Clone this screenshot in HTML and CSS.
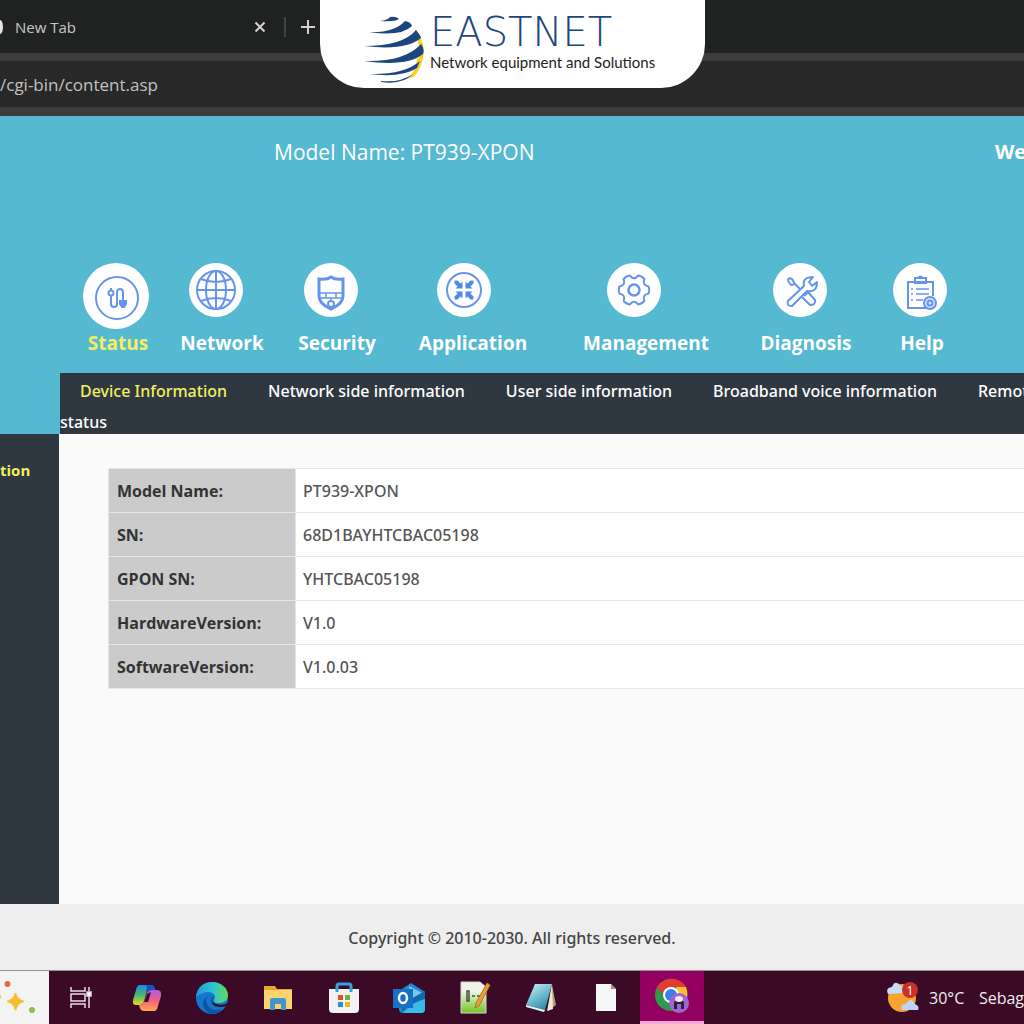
FILE: index.html
```html
<!DOCTYPE html>
<html lang="en">
<head>
<meta charset="utf-8">
<title>PT939-XPON</title>
<link rel="stylesheet" href="styles.css">
</head>
<body>
<div class="browser">
  <div class="tabs">
    <span class="favicon"></span>
    <span class="tab-title">New Tab</span>
    <button class="tab-button" aria-label="Close tab"><svg width="12" height="12" viewBox="0 0 12 12"><path d="M1.500 1.500l9 9M10.500 1.500l-9 9" stroke="#d2d2d2" stroke-width="2"/></svg></button>
    <span class="tab-divider"></span>
    <button class="tab-button" aria-label="Open tab"><svg width="14" height="14" viewBox="0 0 14 14"><path d="M7 0v14M0 7h14" stroke="#d2d2d2" stroke-width="2"/></svg></button>
  </div>
  <div class="address-bar"><input class="address" type="text" aria-label="Address" value="/cgi-bin/content.asp"></div>
</div>

<div class="brand">
  <svg class="brand-globe" width="62" height="68" viewBox="0 0 62 68">
    <g fill="#f5d327"><path d="M51 12Q60 23 61 34L55 28Q55 20 51 12ZM61 36Q60 50 51 61L46 62Q53 53 54 43Z"/></g>
    <g fill="#1d4580">
      <path d="M17 5Q25 4 27 1Q33 0 36 3Q32 6 17 5Z"/>
      <path d="M6 16Q31 17 42 5Q48 6 49 10Q38 21 6 16Z"/>
      <path d="M1 30Q40 30 53 14Q58 20 58 22Q43 35 1 30Z"/>
      <path d="M1 45Q42 46 58 28Q62 34 60 38Q44 51 1 45Z"/>
      <path d="M6 58Q41 59 57 45L54 52Q39 62 6 58Z"/>
      <path d="M18 65Q37 67 50 58Q40 69 18 66Z"/>
    </g>
  </svg>
  <div class="brand-text">
    <div class="brand-name">EASTNET</div>
    <div class="brand-tagline">Network equipment and Solutions</div>
  </div>
</div>

<header class="header">
  <div class="header-top">
    <span class="model">Model Name: PT939-XPON</span>
    <span class="welcome">We</span>
  </div>
  <nav class="menu" aria-label="Main">
    <a class="menu-item active" href="#status"><span class="menu-icon">
      <svg width="66" height="66" viewBox="0 0 66 66" fill="none" stroke="#6593ee" stroke-width="2"><circle cx="34" cy="35" r="21"/><path d="M28 32v9q0 3 3 3t3-3V30q0-4 3-4t3 4v7M28 27v-2"/><circle cx="28" cy="30" r="2.500"/><path d="M37 38h6v3l-2 3h-2l-2-3z" fill="#6593ee"/></svg></span>Status</a>
    <a class="menu-item" href="#network"><span class="menu-icon">
      <svg width="54" height="54" viewBox="0 0 54 54" fill="none" stroke="#6593ee" stroke-width="2"><circle cx="27" cy="27" r="19"/><ellipse cx="27" cy="27" rx="10" ry="19"/><path d="M27 8v38M8 27h38M12 16q15 6 30 0M12 38q15-6 30 0"/></svg></span>Network</a>
    <a class="menu-item" href="#security"><span class="menu-icon">
      <svg width="54" height="54" viewBox="0 0 54 54" fill="none" stroke="#6593ee" stroke-width="2"><path d="M15 16q8 1 12-2 4 3 12 2v17q0 8-12 13-12-5-12-13z" stroke-width="3"/><path d="M15 30h24M16 35h22M22 30v5M32 30v5M27 35v4" stroke-width="1.500"/><circle cx="27" cy="41" r="3"/></svg></span>Security</a>
    <a class="menu-item icon-left" href="#application"><span class="menu-icon">
      <svg width="54" height="54" viewBox="0 0 54 54" fill="none" stroke="#6593ee" stroke-width="2"><circle cx="27" cy="27" r="17"/><g fill="#5288ed" stroke="none"><path id="arrow" d="M25.500 25.500h-7l2-2-3-3V17.500h3l3 3 2-2z"/><use href="#arrow" transform="rotate(90 27 27)"/><use href="#arrow" transform="rotate(180 27 27)"/><use href="#arrow" transform="rotate(270 27 27)"/></g></svg></span>Application</a>
    <a class="menu-item icon-far-left" href="#management"><span class="menu-icon">
      <svg width="54" height="54" viewBox="0 0 54 54" fill="none" stroke="#6593ee" stroke-width="2"><circle cx="27" cy="27" r="5.500" stroke-width="2.500"/><path stroke-linejoin="round" d="M41.600 23.400Q43 27 41.600 30.600Q35 32 37.400 37.800Q35 41 31.100 41.400Q27 36 22.900 41.400Q19 41 16.600 37.800Q19 32 12.400 30.600Q11 27 12.400 23.400Q19 22 16.600 16.200Q19 13 22.900 12.600Q27 18 31.100 12.600Q35 13 37.400 16.200Q35 22 41.600 23.400Z"/></svg></span>Management</a>
    <a class="menu-item" href="#diagnosis"><span class="menu-icon">
      <svg width="54" height="54" viewBox="0 0 54 54" fill="none" stroke="#6593ee" stroke-width="2" stroke-linejoin="round"><path d="M15 38l16-15q-2-9 9-9l-4 5 3 4 5-4q0 11-10 9L19 43q-6 0-4-5z"/><path d="M15 18q0-4 4-2l3 5 5 5M22 21l-4 1-3-4M31 33l4-4 7 8q1 5-5 5l-8-8"/></svg></span>Diagnosis</a>
    <a class="menu-item icon-near" href="#help"><span class="menu-icon">
      <svg width="54" height="54" viewBox="0 0 54 54" fill="none" stroke="#6593ee" stroke-width="2"><path d="M33 45H15V19h25v14"/><path d="M22 15h11v5H22zM25 15q2-3 5 0"/><path d="M23 26h13M23 31h13M23 37h7M18 26h2M18 31h2M18 37h2" stroke-width="1.500"/><circle cx="37" cy="40" r="6" fill="#d9e6ff"/><circle cx="37" cy="40" r="2.500"/></svg></span>Help</a>
  </nav>
</header>

<nav class="submenu" aria-label="Status pages"><a class="active" href="#device">Device Information</a><a href="#net">Network side information</a><a href="#user">User side information</a><a href="#voice">Broadband voice information</a><a href="#remote">Remot<br>status</a></nav>

<div class="body">
  <aside class="sidebar"><a href="#information">tion</a></aside>
  <main class="content">
    <table class="info">
      <tr><th scope="row">Model Name:</th><td>PT939-XPON</td></tr>
      <tr><th scope="row">SN:</th><td>68D1BAYHTCBAC05198</td></tr>
      <tr><th scope="row">GPON SN:</th><td>YHTCBAC05198</td></tr>
      <tr><th scope="row">HardwareVersion:</th><td>V1.0</td></tr>
      <tr><th scope="row">SoftwareVersion:</th><td>V1.0.03</td></tr>
    </table>
  </main>
</div>

<footer class="footer">Copyright © 2010-2030. All rights reserved.</footer>

<div class="taskbar">
  <div class="search-art"><svg width="49" height="52" viewBox="0 0 49 52"><path d="M15.500 23q1.500 6 7.500 7.500-6 1-7.500 8-1.500-7-7.500-8 6-1.500 7.500-7.500z" fill="#f8bd35" stroke="#f8bd35" stroke-width="2" stroke-linejoin="round"/><path d="M-3 21q4 2 4 4.500T-3 30z" fill="#f8bd35"/><circle cx="7.500" cy="13" r="3" fill="#df6d3c"/><circle cx="32" cy="39" r="3" fill="#8cbf4c"/></svg></div>
  <div class="apps">
    <button aria-label="Task view"><svg width="32" height="32" viewBox="0 0 32 32" fill="none" stroke="#e9dce5" stroke-width="1.500"><path d="M6 5v4h14V5M6 26v-4h14v4M6 12h14v7H6zM24 5v4M24 14v12"/><path d="M22 10h4v4h-4z" fill="#fff"/></svg></button>
    <button aria-label="Copilot"><svg width="32" height="32" viewBox="0 0 32 32"><defs><linearGradient id="c1" x2="0" y2="1"><stop stop-color="#2385e8"/><stop offset=".5" stop-color="#43b96f"/><stop offset="1" stop-color="#f3d321"/></linearGradient><linearGradient id="c2" x2="0" y2="1"><stop stop-color="#b05be8"/><stop offset=".5" stop-color="#f0607f"/><stop offset="1" stop-color="#ffa950"/></linearGradient></defs><path d="M9 3h11q3 0 4 5h-5q-3 0-4 4l-2 7q-1 4-5 4H5q-4 0-3-5L5 8q1-5 4-5z" fill="url(#c1)"/><path d="M16 3h4q3 0 4 5h-5q-3 0-4 4z" fill="#1651c6"/><path d="M23 29H13q-4 0-5-6 4 0 5-4l3-8q1-3 5-3h5q5 0 4 6l-3 10q-1 5-4 5z" fill="url(#c2)"/><path d="M16 12l4-2-3 10h-4z" fill="#3a0a27"/></svg></button>
    <button aria-label="Edge"><svg width="34" height="34" viewBox="0 0 34 34"><defs><linearGradient id="e1"><stop stop-color="#1a9be0"/><stop offset=".55" stop-color="#32c5cd"/><stop offset="1" stop-color="#62da55"/></linearGradient></defs><circle cx="17" cy="17" r="16" fill="#1276c9"/><path d="M1 16C2 6 9 1 17 1c9 0 16 6 16 13 0 5-4 8-9 8-4 0-6-2-4-5 1-5-8-10-19-1z" fill="url(#e1)"/><path d="M14 14q-6 6 0 12 5 5 13 2-5 6-13 4Q2 23 14 14z" fill="#0d53a3"/><path d="M19 14q-5 7 2 9 6 2 12-1l-1 3q-7 2-12 0-7-4-1-11z" fill="#3a0a27"/></svg></button>
    <button aria-label="File Explorer"><svg width="32" height="32" viewBox="0 0 32 32"><path d="M2 4h11l2 3h15v20H2z" fill="#e7a72d"/><path d="M2 8h28v19H2z" fill="#f9d36f"/><path d="M8 28V18q0-2 2-2h12q2 0 2 2v10h-5v-6h-6v6z" fill="#4295cf"/></svg></button>
    <button aria-label="Store"><svg width="34" height="34" viewBox="0 0 34 34"><path d="M10 11V5q0-2 2-2h10q2 0 2 2v6" fill="none" stroke="#3aa0dd" stroke-width="3"/><path d="M2 8h30v20q0 4-4 4H6q-4 0-4-4z" fill="#f2f2f3"/><path d="M10 11V8M24 11V8" stroke="#3aa0dd" stroke-width="3"/><path d="M11 14h5v5h-5z" fill="#df4b2c"/><path d="M18 14h5v5h-5z" fill="#7cae32"/><path d="M11 21h5v5h-5z" fill="#2893d1"/><path d="M18 21h5v5h-5z" fill="#edb529"/></svg></button>
    <button aria-label="Outlook"><svg width="34" height="34" viewBox="0 0 34 34"><path d="M7 10L19 2l14 9v17q0 4-4 4H11q-3 0-4-3z" fill="#2189d3"/><path d="M17 5l13 7-13 8z" fill="#75c9ee"/><path d="M33 11v17q0 4-4 4H11z" fill="#39bae9"/><path d="M33 10L10 23v8q8-9 23-13z" fill="#1565af"/><path d="M1 8h20v19H1z" fill="#176fc6"/><ellipse cx="11" cy="17" rx="4" ry="5" fill="none" stroke="#fff" stroke-width="2.500"/></svg></button>
    <button aria-label="Notepad++"><svg width="34" height="34" viewBox="0 0 34 34"><defs><linearGradient id="n1" x2="0" y2="1"><stop offset=".3" stop-color="#eef4e8"/><stop offset="1" stop-color="#6fc61d"/></linearGradient></defs><path d="M3 1h19l6 5v26H3z" fill="url(#n1)" stroke="#d7d7d7"/><path d="M9 10v10h2V10zM14 15h3M19 15h3" stroke="#46513f" stroke-width="1.500" fill="none"/><path d="M29 2l3 2-11 21-4 2 1-5z" fill="#e7a034" stroke="#b17426"/></svg></button>
    <button aria-label="Notepad"><svg width="34" height="34" viewBox="0 0 34 34"><defs><linearGradient id="p1" x2=".6" y2="1"><stop stop-color="#d8f2f6"/><stop offset=".6" stop-color="#68b9cd"/><stop offset="1" stop-color="#328ba5"/></linearGradient></defs><path d="M28 4l4 20-8 6z" fill="#b69b77"/><path d="M28 3l1 25-6 2z" fill="#efe8d6"/><path d="M11 3h17l-7 26L2 24z" fill="url(#p1)"/><path d="M2 24l19 5-1 2-18-5z" fill="#e5f3f6"/></svg></button>
    <button aria-label="Document"><svg width="32" height="32" viewBox="0 0 32 32"><path d="M6 2h15l5 5v22H6z" fill="#f5f6f6"/><path d="M21 2v5h5z" fill="#969096"/></svg></button>
    <button class="running" aria-label="Chrome"><svg width="36" height="36" viewBox="0 0 36 36"><circle cx="17" cy="17" r="16" fill="#2b9b48"/><path d="M3 9C10-3 27-1 32 9H17q-7 0-8 8z" fill="#df3d31"/><path d="M32 9q5 13-7 22l-8-5 7-9-2-8z" fill="#f6c52d"/><circle cx="17" cy="17" r="8" fill="#fff"/><circle cx="17" cy="17" r="6" fill="#397fe6"/><circle cx="25" cy="25" r="10" fill="#a064d5"/><path d="M20 31v-6q0-3 5-3t5 3v6h-3v-5h-4v5z" fill="#292333"/><ellipse cx="25" cy="21" rx="4" ry="3" fill="#f0eafa"/></svg></button>
  </div>
  <div class="weather">
    <svg width="34" height="34" viewBox="0 0 34 34"><circle cx="16" cy="17" r="14" fill="#f7a32d"/><path d="M2 13q-3-6 4-7 3-8 9-1 6 0 4 7z" fill="#c9dcf7"/><path d="M16 29q-3-6 4-6 5-8 9 0 5 2 3 6z" fill="#bcd5f7"/><circle cx="24" cy="9" r="8" fill="#c9302a"/><text class="badge-count" x="24" y="14" text-anchor="middle">1</text></svg>
    <span class="temperature">30°C</span><span>Sebag</span>
  </div>
</div>
</body>
</html>
```
FILE: styles.css
```css
* { box-sizing: border-box; }
body {
  margin: 0;
  min-height: 100vh;
  display: flex;
  flex-direction: column;
  overflow-x: hidden;
  background: #fafafa;
  color: #444;
  font-family: "Noto Sans", "Open Sans", sans-serif;
  font-size: 16px;
}
a { color: inherit; text-decoration: none; }
button { border: 0; padding: 0; background: none; display: flex; align-items: center; justify-content: center; }

.browser { background: #3c3c3b; padding-bottom: 9px; font-family: "Open Sans", sans-serif; }
.tabs { height: 53px; display: flex; align-items: center; background: #202221; color: #c8c8c8; font-size: 15px; }
.favicon { width: 3px; height: 14px; border-radius: 0 100% 100% 0 / 0 50% 50% 0; background: #e4e4e4; }
.tab-title { width: 238px; padding-left: 12px; }
.tab-button { width: 38px; height: 32px; }
.tab-divider { width: 2px; height: 20px; margin: 0 3px 0 5px; background: #414342; }
.address-bar { margin-top: 8px; height: 46px; background: #282828; }
.address { width: 100%; height: 46px; border: 0; padding: 0; background: none; color: #c2c2c2; font: inherit; font-size: 17px; }

.brand {
  position: absolute;
  top: 0;
  left: 50%;
  width: 385px;
  height: 88px;
  margin-left: -192px;
  padding: 16px 0 0 43px;
  display: flex;
  gap: 5px;
  border-radius: 0 0 44px 44px;
  background: #fff;
}
.brand-globe { flex: none; }
.brand-text { white-space: nowrap; }
.brand-name { color: #1d4580; font-family: "DejaVu Sans", sans-serif; font-weight: 200; font-size: 40px; line-height: 32px; }
.brand-tagline { color: #222; font-family: Lato, sans-serif; font-size: 15px; line-height: 28px; }

.header { background: #55b9d2; color: #fff; padding-top: 20px; height: 257px; font-family: "Open Sans", sans-serif; }
.header-top { display: flex; justify-content: space-between; font-size: 21px; line-height: 32px; padding-left: 274px; }
.welcome { width: 29px; font-size: 20px; font-weight: 700; overflow: hidden; }
.menu { display: grid; grid-template-columns: 104px 104px 126px 146px 200px 120px 112px; padding: 95px 0 0 66px; font-size: 19px; font-weight: 700; line-height: 28px; }
.menu-item { display: flex; flex-direction: column; align-items: center; }
.menu-icon { height: 66px; margin-right: 12px; }
.menu-icon svg { display: block; border-radius: 50%; background: #fff; }
.active { color: #f2ef62; }
.menu-item.active .menu-icon, .icon-near .menu-icon { margin-right: 4px; }
.icon-left .menu-icon { margin-right: 18px; }
.icon-far-left .menu-icon { margin-right: 24px; }

.submenu { margin-left: 60px; background: #2f3741; box-shadow: -60px 0 #55b9d2; color: #fff; font-weight: 500; line-height: 31px; height: 61px; padding-top: 3px; white-space: nowrap; overflow: hidden; }
.submenu a { padding: 0 21px 0 20px; }
.body { flex: 1; display: flex; }
.sidebar { width: 59px; background: #2f3741; color: #f2ef62; font-family: "Open Sans", sans-serif; font-size: 15px; font-weight: 700; padding-top: 24px; line-height: 24px; }
.content { flex: 1; padding: 34px 0 34px 49px; overflow: hidden; }
.info { width: 100%; border-collapse: collapse; background: #fff; }
.info th, .info td { height: 44px; padding: 0 8px; border: 1px solid #e6e6e6; border-right: 0; text-align: left; }
.info td { padding-left: 7px; font-weight: 500; color: #555; }
.info th { width: 187px; background: #cbcbcb; color: #333; font-family: "Open Sans", sans-serif; }

.footer { height: 66px; background: #eee; font-weight: 500; text-align: center; line-height: 68px; }
.taskbar { height: 54px; display: flex; background: #3a0a27; border-top: 1px solid #9b8e96; color: #eee; font-family: "Open Sans", sans-serif; }
.search-art { width: 49px; background: #f4f3f3; }
.apps { width: 655px; display: flex; justify-content: space-between; }
.apps button { width: 64px; }
.apps .running { background: #94005f; border-bottom: 3px solid #f3a8d5; }
.weather { width: 138px; margin-left: auto; display: flex; align-items: center; gap: 9px; white-space: nowrap; overflow: hidden; }
.weather svg { flex: none; }
.temperature { width: 41px; }
.badge-count { fill: #fff; font-size: 13px; }
```
